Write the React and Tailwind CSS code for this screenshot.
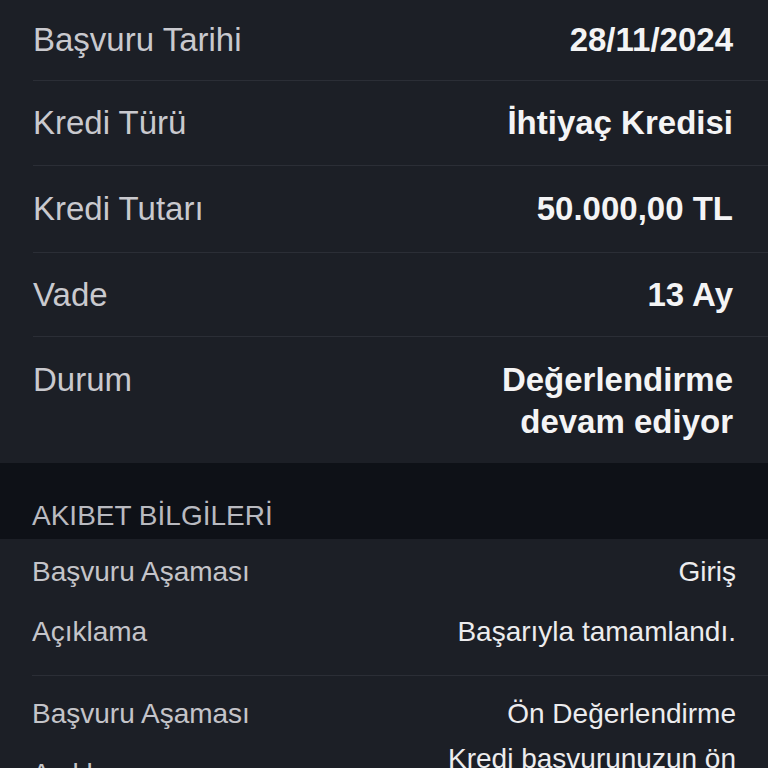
import React from "react";

const font = { fontFamily: '"Liberation Sans", Arial, sans-serif' };

function TopRow({ label, value, h, last }) {
  return (
    <div className={`ml-[33px] ${last ? "" : "border-b border-[#2b2e36]"}`}>
      <div className={`flex items-center justify-between pr-[35px] ${h}`}>
        <span className="text-[33px] leading-[42px] text-[#c9c9ce]">{label}</span>
        <span className="text-[33px] leading-[42px] font-bold text-[#f4f4f5]">{value}</span>
      </div>
    </div>
  );
}

function LowRow({ label, value }) {
  return (
    <div className="flex min-h-[60px] items-center justify-between">
      <span className="text-[28px] leading-[30px] text-[#c4c4c9]">{label}</span>
      <span className="max-w-[300px] text-right text-[28px] leading-[30px] text-[#ececee]">{value}</span>
    </div>
  );
}

export default function App() {
  return (
    <div className="h-[768px] w-[768px] overflow-hidden bg-[#1c1f26]" style={font}>
      <div className="bg-[#1c1f26]">
        <TopRow label="Başvuru Tarihi" value="28/11/2024" h="h-[80px]" />
        <TopRow label="Kredi Türü" value="İhtiyaç Kredisi" h="h-[84px]" />
        <TopRow label="Kredi Tutarı" value="50.000,00 TL" h="h-[86px]" />
        <TopRow label="Vade" value="13 Ay" h="h-[83px]" />
        <div className="ml-[33px] flex items-start justify-between pb-[20px] pr-[35px] pt-[22px]">
          <span className="text-[33px] leading-[42px] text-[#c9c9ce]">Durum</span>
          <span className="text-right text-[33px] leading-[42px] font-bold text-[#f4f4f5]">
            Değerlendirme
            <br />
            devam ediyor
          </span>
        </div>
      </div>
      <div className="flex h-[76px] items-end bg-[#0e1117] pb-[6px] pl-[32px]">
        <span className="text-[28px] leading-[34px] text-[#b9bac0]">AKIBET BİLGİLERİ</span>
      </div>
      <div className="bg-[#1c1f26]">
        <div className="ml-[32px] border-b border-[#2b2e36] pb-[13px] pr-[32px] pt-[3px]">
          <LowRow label="Başvuru Aşaması" value="Giriş" />
          <LowRow label="Açıklama" value="Başarıyla tamamlandı." />
        </div>
        <div className="ml-[32px] pr-[32px] pt-[8px]">
          <LowRow label="Başvuru Aşaması" value="Ön Değerlendirme" />
          <LowRow label="Açıklama" value="Kredi basvurunuzun ön değerlendirmesi yapıldı." />
        </div>
      </div>
    </div>
  );
}
